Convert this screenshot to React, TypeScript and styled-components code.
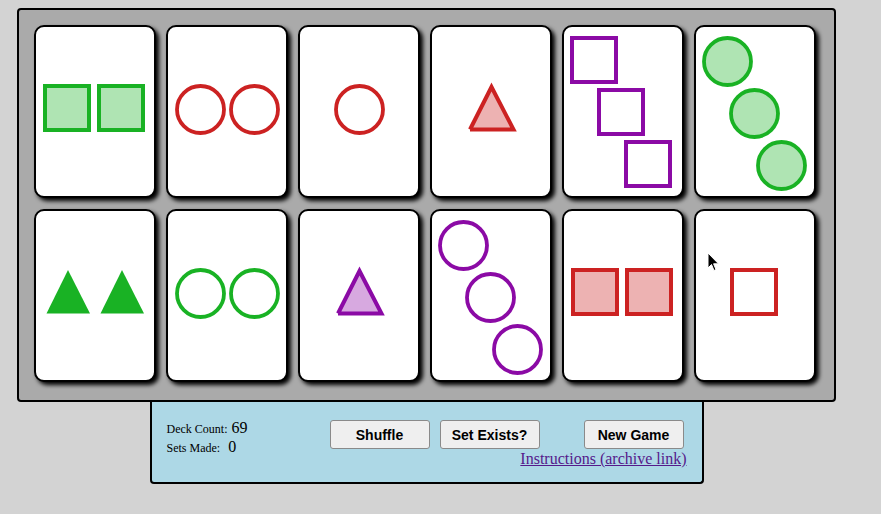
import React from 'react';
import styled, { createGlobalStyle } from 'styled-components';

type ShapeKind = 'square' | 'circle' | 'triangle';
type FillKind = 'open' | 'shaded' | 'solid';
type ColorKind = 'green' | 'red' | 'purple';

interface CardData {
  count: 1 | 2 | 3;
  shape: ShapeKind;
  fill: FillKind;
  color: ColorKind;
}

const COLORS: Record<ColorKind, string> = {
  green: '#19b224',
  red: '#cc2222',
  purple: '#8b0aa5',
};

const CARDS: CardData[] = [
  { count: 2, shape: 'square', fill: 'shaded', color: 'green' },
  { count: 2, shape: 'circle', fill: 'open', color: 'red' },
  { count: 1, shape: 'circle', fill: 'open', color: 'red' },
  { count: 1, shape: 'triangle', fill: 'shaded', color: 'red' },
  { count: 3, shape: 'square', fill: 'open', color: 'purple' },
  { count: 3, shape: 'circle', fill: 'shaded', color: 'green' },
  { count: 2, shape: 'triangle', fill: 'solid', color: 'green' },
  { count: 2, shape: 'circle', fill: 'open', color: 'green' },
  { count: 1, shape: 'triangle', fill: 'shaded', color: 'purple' },
  { count: 3, shape: 'circle', fill: 'open', color: 'purple' },
  { count: 2, shape: 'square', fill: 'shaded', color: 'red' },
  { count: 1, shape: 'square', fill: 'open', color: 'red' },
];

const GlobalStyle = createGlobalStyle`
  html, body {
    margin: 0;
    padding: 0;
    background: #d3d3d3;
  }
  body {
    font-family: "Liberation Serif", serif;
  }
`;

const Page = styled.div`
  position: relative;
  width: 819px;
  padding: 8px 0 0 17px;
  min-height: 506px;
`;

const Board = styled.div`
  box-sizing: border-box;
  width: 819px;
  height: 394px;
  padding: 15px;
  background: #aaaaaa;
  border: 2px solid #000;
  border-radius: 4px;
  display: grid;
  grid-template-columns: repeat(6, 122px);
  grid-auto-rows: 173px;
  column-gap: 10px;
  row-gap: 11px;
`;

const CardFace = styled.div<{ $triple: boolean }>`
  box-sizing: border-box;
  width: 122px;
  height: 173px;
  background: #fff;
  border: 2px solid #000;
  border-radius: 10px;
  box-shadow: 3px 3px 4px #000;
  display: flex;
  flex-direction: ${(p) => (p.$triple ? 'column' : 'row')};
  justify-content: center;
  align-items: center;
  padding: ${(p) => (p.$triple ? '0 6px 0 4px' : '0 0 7px 0')};
`;

const Slot = styled.div<{ $align: 'flex-start' | 'center' | 'flex-end' }>`
  align-self: ${(p) => p.$align};
  width: 54px;
  height: 52px;
  flex-shrink: 0;
`;

const ShapeSvg = styled.svg`
  display: block;
  overflow: visible;
`;

const Panel = styled.div`
  box-sizing: border-box;
  width: 554px;
  height: 82px;
  margin: 0 auto;
  padding: 18px 18px 0 15px;
  background: #add8e6;
  border: 2px solid #000;
  border-top: none;
  border-radius: 0 0 4px 4px;
  display: flex;
  align-items: flex-start;
`;

const Stats = styled.div`
  flex: 1;
  margin-top: -1px;
  font-family: "Liberation Serif", serif;
  font-size: 16px;
  line-height: 18px;
  color: #000;
`;

const StatLine = styled.div`
  white-space: nowrap;
`;

const StatLabel = styled.span`
  font-size: 12px;
`;

const StatValue = styled.span<{ $gap: number }>`
  margin-left: ${(p) => p.$gap}px;
`;

const Controls = styled.div`
  display: flex;
  flex-direction: column;
  align-items: flex-end;
`;

const ButtonRow = styled.div`
  display: flex;
  gap: 10px;
`;

const ActionButton = styled.button<{ $push?: number }>`
  box-sizing: border-box;
  width: 100px;
  height: 29px;
  margin-left: ${(p) => p.$push ?? 0}px;
  padding: 0;
  background: #efefef;
  border: 1px solid #8a8a8a;
  border-radius: 3px;
  color: #000;
  font-family: "Liberation Sans", Arial, sans-serif;
  font-weight: bold;
  font-size: 14px;
  cursor: default;
`;

const InstructionsLink = styled.a`
  display: block;
  margin: 1px -3px 0 0;
  font-family: "Liberation Serif", serif;
  font-size: 16px;
  line-height: 18px;
  color: #551a8b;
  text-decoration: underline;
`;

const Pointer = styled.svg`
  position: absolute;
  left: 707px;
  top: 252px;
  pointer-events: none;
`;

function Shape({ shape, fill, color }: { shape: ShapeKind; fill: FillKind; color: ColorKind }) {
  const c = COLORS[color];
  const fillColor = fill === 'open' ? 'none' : c;
  const fillOpacity = fill === 'shaded' ? 0.35 : 1;
  const stroke = fill === 'solid' ? 'none' : c;
  return (
    <ShapeSvg width={54} height={52} viewBox="0 0 54 52">
      {shape === 'square' && (
        <rect x={4} y={4} width={44} height={44} fill={fillColor} fillOpacity={fillOpacity} stroke={stroke} strokeWidth={4} />
      )}
      {shape === 'circle' && (
        <circle cx={27.5} cy={27.5} r={23.5} fill={fillColor} fillOpacity={fillOpacity} stroke={stroke} strokeWidth={3.8} />
      )}
      {shape === 'triangle' && (
        <path
          d={fill === 'solid' ? 'M5.5 47.5 L27 4 L49 47.5 Z' : 'M6 47.5 L27.5 5 L49.5 47.5 L6 47.5'}
          fill={fillColor}
          fillOpacity={fillOpacity}
          stroke={stroke}
          strokeWidth={4}
          strokeLinejoin="miter"
        />
      )}
    </ShapeSvg>
  );
}

const TRIPLE_ALIGN: Array<'flex-start' | 'center' | 'flex-end'> = ['flex-start', 'center', 'flex-end'];

function Card({ data }: { data: CardData }) {
  const triple = data.count === 3;
  return (
    <CardFace $triple={triple}>
      {Array.from({ length: data.count }).map((_, i) => (
        <Slot key={i} $align={triple ? TRIPLE_ALIGN[i] : 'center'}>
          <Shape shape={data.shape} fill={data.fill} color={data.color} />
        </Slot>
      ))}
    </CardFace>
  );
}

export default function App() {
  return (
    <>
      <GlobalStyle />
      <Page>
        <Board>
          {CARDS.map((card, i) => (
            <Card key={i} data={card} />
          ))}
        </Board>
        <Panel>
          <Stats>
            <StatLine>
              <StatLabel>Deck Count:</StatLabel>
              <StatValue $gap={4}>69</StatValue>
            </StatLine>
            <StatLine>
              <StatLabel>Sets Made:</StatLabel>
              <StatValue $gap={8}>0</StatValue>
            </StatLine>
          </Stats>
          <Controls>
            <ButtonRow>
              <ActionButton>Shuffle</ActionButton>
              <ActionButton>Set Exists?</ActionButton>
              <ActionButton $push={34}>New Game</ActionButton>
            </ButtonRow>
            <InstructionsLink href="#instructions">Instructions (archive link)</InstructionsLink>
          </Controls>
        </Panel>
        <Pointer width={13} height={20} viewBox="0 0 13 20">
          <path d="M1 1 L1 16 L4.5 12.5 L7 18.5 L9 17.6 L6.6 11.8 L11.5 11.8 Z" fill="#000" stroke="#fff" strokeWidth={1} strokeLinejoin="round" />
        </Pointer>
      </Page>
    </>
  );
}
